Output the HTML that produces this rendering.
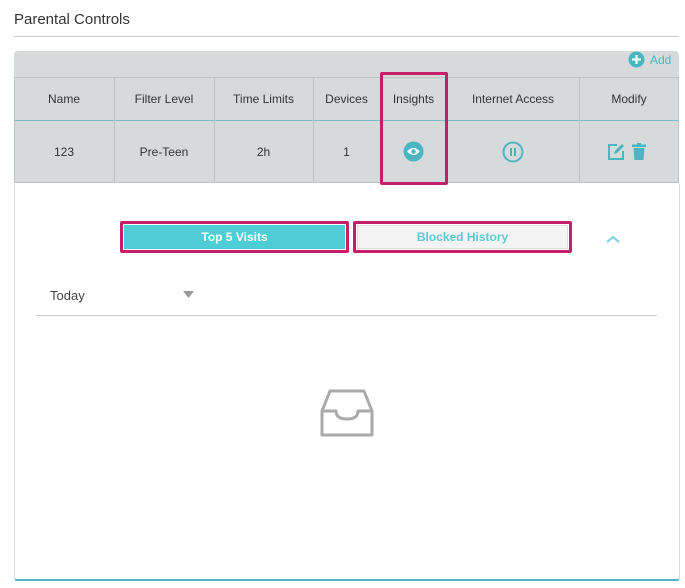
<!DOCTYPE html>
<html><head><style>
*{margin:0;padding:0;box-sizing:border-box}
body{width:685px;height:588px;background:#fff;font-family:"Liberation Sans",sans-serif;position:relative;overflow:hidden;color:#333}
.a{position:absolute}
.c{position:absolute;display:flex;align-items:center;justify-content:center;font-size:12px;color:#333}
.vl{position:absolute;width:1px;background:#bfc3c4}
</style></head><body>
<div class="a" style="left:14px;top:11px;font-size:15px;color:#333">Parental Controls</div>
<div class="a" style="left:14px;top:36px;width:665px;height:1px;background:#ccc"></div>
<div class="a" style="left:14px;top:51px;width:665px;height:132px;background:#d7dadb;border-radius:4px 4px 0 0"></div>
<svg class="a" style="left:628px;top:51px" width="17" height="17" viewBox="0 0 17 17"><circle cx="8.5" cy="8.5" r="8" fill="#4bb6c1"/><path d="M8.5 4v9M4 8.5h9" stroke="#fff" stroke-width="2.2"/></svg>
<div class="a" style="left:650px;top:53px;font-size:12px;color:#4bb6c1">Add</div>
<div class="a" style="left:14px;top:77px;width:665px;height:1px;background:#bfc3c4"></div>
<div class="a" style="left:14px;top:120px;width:665px;height:1px;background:#4bb6c1;opacity:.7"></div>
<div class="a" style="left:14px;top:182px;width:665px;height:2px;background:#fff;border-top:1px solid #bfc3c4"></div>
<div class="vl" style="left:14px;top:77px;height:106px"></div>
<div class="vl" style="left:114px;top:77px;height:106px"></div>
<div class="vl" style="left:214px;top:77px;height:106px"></div>
<div class="vl" style="left:313px;top:77px;height:106px"></div>
<div class="vl" style="left:380px;top:77px;height:106px"></div>
<div class="vl" style="left:447px;top:77px;height:106px"></div>
<div class="vl" style="left:579px;top:77px;height:106px"></div>
<div class="vl" style="left:678px;top:77px;height:106px"></div>
<div class="c" style="left:14px;top:77px;width:100px;height:43px">Name</div>
<div class="c" style="left:114px;top:77px;width:100px;height:43px">Filter Level</div>
<div class="c" style="left:214px;top:77px;width:99px;height:43px">Time Limits</div>
<div class="c" style="left:313px;top:77px;width:67px;height:43px">Devices</div>
<div class="c" style="left:380px;top:77px;width:67px;height:43px">Insights</div>
<div class="c" style="left:447px;top:77px;width:132px;height:43px">Internet Access</div>
<div class="c" style="left:579px;top:77px;width:100px;height:43px">Modify</div>
<div class="c" style="left:14px;top:121px;width:100px;height:61px">123</div>
<div class="c" style="left:114px;top:121px;width:100px;height:61px">Pre-Teen</div>
<div class="c" style="left:214px;top:121px;width:99px;height:61px">2h</div>
<div class="c" style="left:313px;top:121px;width:67px;height:61px">1</div>
<svg class="a" style="left:403px;top:141px" width="21" height="21" viewBox="0 0 21 21"><circle cx="10.5" cy="10.5" r="10" fill="#4bb6c1"/><path d="M4 10.5Q10.5 3.5 17 10.5Q10.5 17.5 4 10.5Z" fill="#fff"/><circle cx="10.5" cy="10.5" r="2.3" fill="#4bb6c1"/></svg>
<svg class="a" style="left:502px;top:141px" width="22" height="22" viewBox="0 0 22 22"><circle cx="11" cy="11" r="9.5" fill="none" stroke="#4bb6c1" stroke-width="2"/><path d="M9 7v8M13 7v8" stroke="#4bb6c1" stroke-width="2"/></svg>
<svg class="a" style="left:607px;top:143px" width="18" height="18" viewBox="0 0 18 18"><path d="M10 2H2v14h14V8" fill="none" stroke="#4bb6c1" stroke-width="2"/><path d="M7 11l1-3 7-7 2 2-7 7z" fill="#4bb6c1"/></svg>
<svg class="a" style="left:632px;top:143px" width="14" height="17" viewBox="0 0 14 17"><rect x="0" y="1.5" width="14" height="2.5" fill="#4bb6c1"/><rect x="5" y="0" width="4" height="2" fill="#4bb6c1"/><path d="M1.5 5h11l-1 12h-9z" fill="#4bb6c1"/></svg>
<div class="a" style="left:380px;top:72px;width:68px;height:113px;border:3px solid #c41f68;border-radius:2px"></div>
<div class="a" style="left:14px;top:184px;width:666px;height:397px;border:1px solid #ddd;border-top:none;border-bottom:2px solid #4bb6c1;border-radius:0 0 3px 3px"></div>
<div class="a" style="left:120px;top:221px;width:229px;height:32px;border:3px solid #c41f68;border-radius:2px;padding:1px"><div style="width:100%;height:100%;background:#4ecdd6;color:#fff;font-weight:bold;font-size:12px;display:flex;align-items:center;justify-content:center">Top 5 Visits</div></div>
<div class="a" style="left:353px;top:221px;width:219px;height:32px;border:3px solid #c41f68;border-radius:2px;padding:1px"><div style="width:100%;height:100%;background:#f4f4f4;border:1px solid #ddd;color:#5ccbd6;font-weight:bold;font-size:12px;display:flex;align-items:center;justify-content:center">Blocked History</div></div>
<svg class="a" style="left:605px;top:234px" width="16" height="10" viewBox="0 0 16 10"><path d="M2 8l6-5 6 5" fill="none" stroke="#7fd6de" stroke-width="2.2"/></svg>
<div class="a" style="left:50px;top:288px;font-size:13px;color:#444">Today</div>
<svg class="a" style="left:183px;top:291px" width="11" height="8" viewBox="0 0 11 8"><path d="M0 0h11L5.5 7z" fill="#999"/></svg>
<div class="a" style="left:36px;top:315px;width:621px;height:1px;background:#ccc"></div>
<svg class="a" style="left:320px;top:389px" width="54" height="50" viewBox="0 0 54 50"><path d="M10 2h34l8 20v24H2V22z" fill="none" stroke="#aaa" stroke-width="3" stroke-linejoin="round"/><path d="M2 22h14q0 8 11 8t11-8h14" fill="none" stroke="#aaa" stroke-width="3" stroke-linejoin="round"/></svg>
</body></html>
